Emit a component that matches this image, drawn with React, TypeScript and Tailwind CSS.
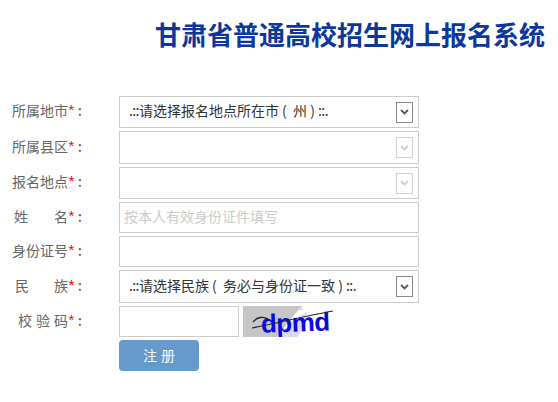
const font = { fontFamily: '"Noto Sans CJK SC", "Liberation Sans", sans-serif' }

function Label({ children, width }: { children: React.ReactNode; width?: string }) {
  return (
    <div className="w-[119px] shrink-0 flex items-center justify-end pr-[37px] pb-1 text-sm text-[#666]">
      <div className={width ? `flex justify-between ${width}` : ""}>{children}</div>
      <span className="w-[7px] text-center text-[15px] text-[#f00] font-['Liberation_Sans']">*</span>
      <span className="w-[7px] text-right font-medium">:</span>
    </div>
  )
}

function Arrow({ disabled }: { disabled?: boolean }) {
  return (
    <div
      className={
        disabled
          ? "w-[17px] h-[21px] border border-[#d0d0d0] flex items-center justify-center bg-white"
          : "w-[17px] h-[21px] border border-[#8a8a8a] flex items-center justify-center bg-white"
      }
    >
      <svg width="9" height="6" viewBox="0 0 9 6" fill="none">
        <path d="M1 1l3.5 3.5L8 1" stroke={disabled ? "#cfcfcf" : "#5a5a5a"} strokeWidth="1.8" />
      </svg>
    </div>
  )
}

function Select({ children, disabled, h }: { children?: React.ReactNode; disabled?: boolean; h: string }) {
  return (
    <div className={`w-[300px] ${h} border border-[#ccc] flex items-center justify-between pl-[9px] pr-[5px] text-sm text-[#333]`}>
      <span className="whitespace-pre pb-1">{children}</span>
      <Arrow disabled={disabled} />
    </div>
  )
}

function Dots({ children }: { children: string }) {
  return <span className="tracking-[-0.6px]">{children}</span>
}

function Captcha() {
  return (
    <svg width="90" height="31" viewBox="0 0 90 31" className="ml-1">
      <path d="M0 0H59L52 8L34 31H0Z" fill="#c6c6c6" />
      <path d="M36 31L50 14L64 6L62 20L54 31Z" fill="#dcd8ee" />
      <rect x="56" y="1" width="3" height="3" fill="#d8d8d8" />
      <text x="18" y="26" fontFamily="Liberation Sans" fontWeight="bold" fontSize="26" letterSpacing="-0.5" fill="#0a0ae0" transform="rotate(-2 40 20)">
        dpmd
      </text>
      <path d="M9 22C35 17 62 10 90 5" stroke="#222" strokeWidth="1.2" fill="none" />
      <path d="M10 16C14 11 20 10 25 13" stroke="#222" strokeWidth="1.3" fill="none" />
    </svg>
  )
}

export default function App() {
  return (
    <div className="w-[558px] h-[402px] bg-white overflow-hidden" style={font}>
      <h1 className="pl-[155px] pt-[19px] h-[96px] text-[26px] leading-[30px] font-bold text-[#0b389b] whitespace-nowrap">
        甘肃省普通高校招生网上报名系统
      </h1>
      <div className="flex flex-col gap-[3px]">
        <div className="flex">
          <Label>所属地市</Label>
          <Select h="h-[32px]">
            <Dots>.::</Dots>请选择报名地点所在市 (  州 ) <Dots>::.</Dots>
          </Select>
        </div>
        <div className="flex">
          <Label>所属县区</Label>
          <Select h="h-[33px]" disabled />
        </div>
        <div className="flex">
          <Label>报名地点</Label>
          <Select h="h-[32px]" disabled />
        </div>
        <div className="flex">
          <Label width="w-[54px]">
            <span>姓</span>
            <span>名</span>
          </Label>
          <input
            placeholder="按本人有效身份证件填写"
            className="w-[300px] h-[31px] border border-[#ccc] px-1 pb-1 text-sm outline-none placeholder:text-[#ccc]"
          />
        </div>
        <div className="flex">
          <Label>身份证号</Label>
          <input className="w-[300px] h-[31px] border border-[#ccc] px-1 text-sm outline-none" />
        </div>
        <div className="flex">
          <Label width="w-[53px]">
            <span>民</span>
            <span>族</span>
          </Label>
          <Select h="h-[33px]">
            <Dots>.::</Dots>请选择民族 (  务必与身份证一致 ) <Dots>::.</Dots>
          </Select>
        </div>
        <div className="flex">
          <Label width="w-[50px]">
            <span>校</span>
            <span>验</span>
            <span>码</span>
          </Label>
          <input className="w-[120px] h-[31px] border border-[#ccc] px-1 text-sm outline-none" />
          <Captcha />
        </div>
        <div className="pl-[119px]">
          <button className="w-[80px] h-[31px] rounded-[4px] bg-[#6699cc] text-white text-sm tracking-[4px] pl-1 pb-[2px]">注册</button>
        </div>
      </div>
    </div>
  )
}
